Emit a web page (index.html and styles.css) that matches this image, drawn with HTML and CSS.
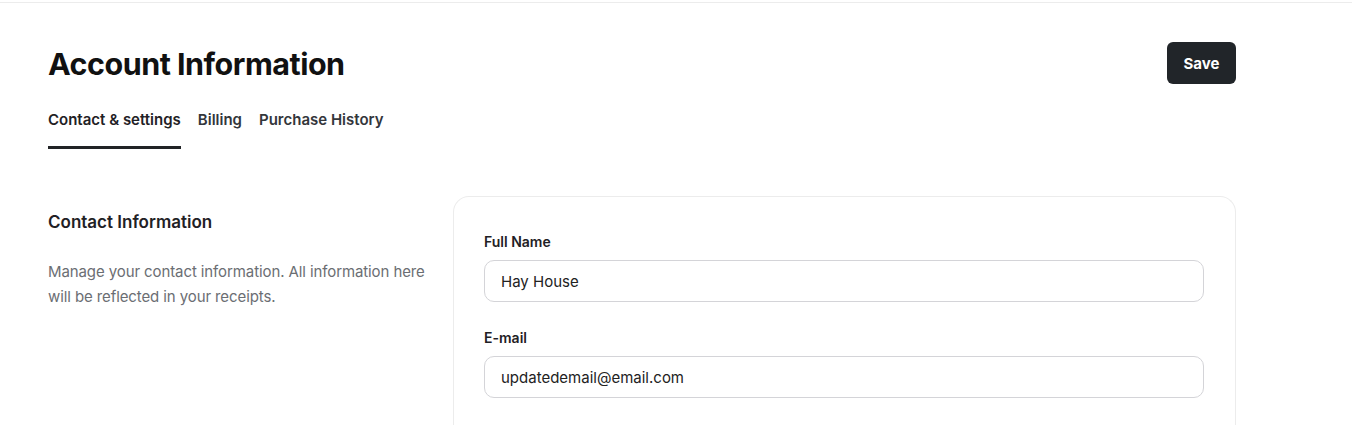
FILE: index.html
```html
<!DOCTYPE html>
<html>
<head>
<meta charset="utf-8">
<link rel="stylesheet" href="styles.css">
</head>
<body>
<div class="topbar"></div>
<main class="page">
  <div class="header">
    <h1 class="title">Account Information</h1>
    <button class="save">Save</button>
  </div>
  <nav class="tabs">
    <a class="tab active">Contact &amp; settings</a>
    <a class="tab">Billing</a>
    <a class="tab">Purchase History</a>
  </nav>
  <section class="section">
    <div class="intro">
      <h2 class="intro-title">Contact Information</h2>
      <p class="intro-text">Manage your contact information. All information here will be reflected in your receipts.</p>
    </div>
    <div class="card">
      <div class="field">
        <label class="label">Full Name</label>
        <div class="input">Hay House</div>
      </div>
      <div class="field">
        <label class="label">E-mail</label>
        <div class="input">updatedemail@email.com</div>
      </div>
    </div>
  </section>
</main>
</body>
</html>
```

FILE: styles.css
```css
* { box-sizing: border-box; }
html, body { margin: 0; background: #fff; }
body {
  font-family: "Inter", "Noto Sans", sans-serif;
  color: #1f2125;
  overflow: hidden;
}
.topbar {
  height: 3px;
  border-bottom: 1px solid #ececec;
}
.page {
  width: 1188px;
  margin-left: 48px;
}
.header {
  display: flex;
  align-items: center;
  justify-content: space-between;
  margin-top: 39px;
  height: 42px;
}
.title {
  margin: 0;
  font-size: 30.5px;
  font-weight: 700;
  letter-spacing: -0.5px;
  color: #111;
}
.save {
  width: 69px;
  height: 42px;
  border: none;
  border-radius: 6px;
  background: #212529;
  color: #fff;
  font-family: "Inter", sans-serif;
  font-size: 15px;
  font-weight: 700;
  padding: 0;
}
.tabs {
  display: flex;
  gap: 17px;
  margin-top: 25px;
}
.tab {
  font-size: 15px;
  font-weight: 600;
  letter-spacing: 0;
  color: #33363b;
  line-height: 22px;
  padding-bottom: 15px;
  border-bottom: 3px solid transparent;
}
.tab.active {
  color: #1f2125;
  border-bottom-color: #212326;
}
.section {
  display: flex;
  margin-top: 47px;
}
.intro {
  width: 405px;
  padding-top: 14px;
}
.intro-title {
  margin: 0;
  font-size: 17px;
  font-weight: 600;
  line-height: 24px;
  color: #1f2125;
}
.intro-text {
  margin: 25px 0 0;
  max-width: 384px;
  font-size: 15px;
  line-height: 25px;
  letter-spacing: -0.1px;
  color: #6b6e73;
}
.card {
  flex: 1;
  border: 1px solid #ececec;
  border-bottom: none;
  border-radius: 16px 16px 0 0;
  padding: 34px 31px 40px 30px;
  display: flex;
  flex-direction: column;
  gap: 25px;
  min-height: 240px;
}
.label {
  display: block;
  font-size: 14px;
  font-weight: 600;
  line-height: 22px;
  color: #1f2125;
}
.input {
  margin-top: 7px;
  height: 42px;
  border: 1px solid #d4d4d8;
  border-radius: 10px;
  padding: 0 16px;
  display: flex;
  align-items: center;
  font-size: 15px;
  color: #222;
}
```
